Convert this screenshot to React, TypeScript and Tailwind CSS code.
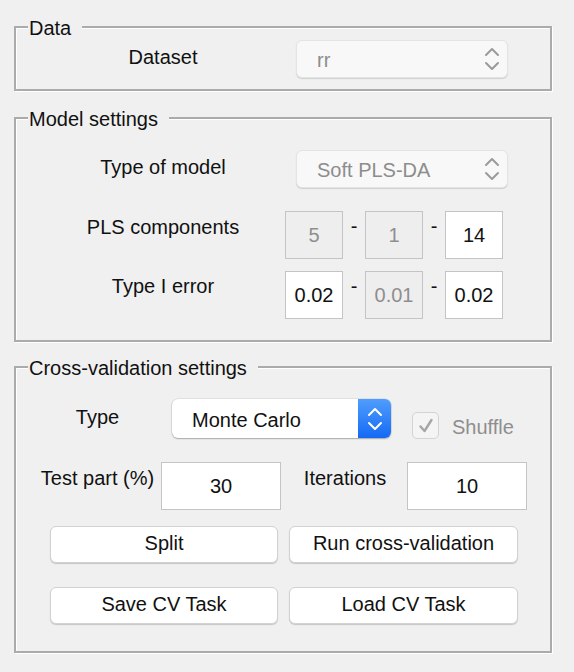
import type { ReactNode } from "react";

function Panel({ title, className, children }: { title: string; className: string; children: ReactNode }) {
  return (
    <div className={`relative w-[538px] border-2 border-[#ababab] shadow-[1px_1px_0_#ffffff,inset_1px_1px_0_#ffffff] ${className}`}>
      <div className="absolute -top-[11px] left-[12px] bg-[#f0f0f0] pl-[1px] pr-[11px] text-[20px] leading-[23px]">
        {title}
      </div>
      {children}
    </div>
  );
}

function Chevrons({ color }: { color: string }) {
  return (
    <svg width="16" height="24" viewBox="0 0 16 24" fill="none" stroke={color} strokeWidth="2" strokeLinecap="round" strokeLinejoin="round">
      <path d="M2 8 L8 2 L14 8" />
      <path d="M2 16 L8 22 L14 16" />
    </svg>
  );
}

function DisabledSelect({ value, className }: { value: string; className?: string }) {
  return (
    <div className={`flex h-[38px] w-[212px] items-center justify-between rounded-[6px] border border-[#e4e4e4] bg-[#f8f8f8] pl-[20px] pr-[7px] shadow-[0_1px_1px_rgba(0,0,0,0.14)] ${className ?? ""}`}>
      <span className="pt-[3px] text-[20px] leading-[23px] text-[#8d8d8d]">{value}</span>
      <Chevrons color="#9b9b9b" />
    </div>
  );
}

function Field({ value, disabled, className }: { value: string; disabled?: boolean; className: string }) {
  return (
    <div
      className={`flex h-[48px] items-center justify-center border border-[#c4c4c4] text-[20px] leading-[23px] ${
        disabled ? "bg-[#eeeeee] text-[#8e8e8e]" : "bg-white text-[#111]"
      } ${className}`}
    >
      {value}
    </div>
  );
}

function Button({ label, className }: { label: string; className: string }) {
  return (
    <div className={`flex h-[37px] items-center justify-center rounded-[6px] border border-[#d2d2d2] bg-white pb-[2px] text-[20px] leading-[23px] shadow-[0_1px_1px_rgba(0,0,0,0.18)] ${className}`}>
      {label}
    </div>
  );
}

function Range({ a, b, c }: { a: [string, boolean]; b: [string, boolean]; c: [string, boolean] }) {
  return (
    <div className="ml-[7px] flex items-start">
      <Field value={a[0]} disabled={a[1]} className="w-[58px]" />
      <div className="mt-[4px] w-[22px] text-center">-</div>
      <Field value={b[0]} disabled={b[1]} className="w-[58px]" />
      <div className="mt-[4px] w-[22px] text-center">-</div>
      <Field value={c[0]} disabled={c[1]} className="w-[58px]" />
    </div>
  );
}

export default function App() {
  return (
    <div className="h-[672px] w-[574px] bg-[#f0f0f0] pl-[14px] pt-[26px] font-['Liberation_Sans',Arial,sans-serif] text-[20px] leading-[23px] text-[#111]">
      <Panel title="Data" className="h-[65px]">
        <div className="flex items-start pt-[12px]">
          <div className="ml-[32px] mt-[6px] w-[230px] text-center">Dataset</div>
          <DisabledSelect value="rr" className="ml-[18px]" />
        </div>
      </Panel>

      <Panel title="Model settings" className="mt-[26px] h-[225px]">
        <div className="flex flex-col pt-[31px]">
          <div className="flex items-start">
            <div className="ml-[32px] mt-[6px] w-[230px] text-center">Type of model</div>
            <DisabledSelect value="Soft PLS-DA" className="ml-[18px]" />
          </div>
          <div className="mt-[23px] flex items-start">
            <div className="ml-[32px] mt-[5px] w-[230px] text-center">PLS components</div>
            <Range a={["5", true]} b={["1", true]} c={["14", false]} />
          </div>
          <div className="mt-[12px] flex items-start">
            <div className="ml-[32px] mt-[4px] w-[230px] text-center">Type I error</div>
            <Range a={["0.02", false]} b={["0.01", true]} c={["0.02", false]} />
          </div>
        </div>
      </Panel>

      <Panel title="Cross-validation settings" className="mt-[24px] h-[287px]">
        <div className="flex flex-col pt-[31px]">
          <div className="flex items-start">
            <div className="ml-[20px] mt-[7px] w-[123px] text-center">Type</div>
            <div className="ml-[13px] flex h-[39px] w-[219px] items-stretch overflow-hidden rounded-[6px] bg-white shadow-[0_0_0_0.5px_rgba(0,0,0,0.12),0_1px_1.5px_rgba(0,0,0,0.25)]">
              <div className="flex flex-1 items-center pl-[20px] pt-[3px]">Monte Carlo</div>
              <div className="flex w-[33px] items-center justify-center bg-gradient-to-b from-[#4f9dfd] to-[#1469f4]">
                <Chevrons color="#ffffff" />
              </div>
            </div>
            <div className="ml-[21px] mt-[13px] flex h-[27px] w-[27px] items-center justify-center rounded-[5px] border border-[#d3d3d3] bg-[#f4f4f4]">
              <svg width="18" height="18" viewBox="0 0 18 18" fill="none" stroke="#a6a6a6" strokeWidth="2.4" strokeLinecap="round" strokeLinejoin="round">
                <path d="M3.5 9.5 L7.5 14 L14.5 3" />
              </svg>
            </div>
            <div className="ml-[13px] mt-[17px] text-[#8e8e8e]">Shuffle</div>
          </div>

          <div className="mt-[23px] flex items-start">
            <div className="ml-[20px] mt-[5px] w-[123px] text-center">Test part (%)</div>
            <Field value="30" className="ml-[2px] w-[120px]" />
            <div className="ml-[4px] mt-[5px] w-[120px] text-center">Iterations</div>
            <Field value="10" className="ml-[2px] w-[120px]" />
          </div>

          <div className="mt-[16px] flex">
            <Button label="Split" className="ml-[34px] w-[228px]" />
            <Button label="Run cross-validation" className="ml-[11px] w-[229px]" />
          </div>
          <div className="mt-[24px] flex">
            <Button label="Save CV Task" className="ml-[34px] w-[228px]" />
            <Button label="Load CV Task" className="ml-[11px] w-[229px]" />
          </div>
        </div>
      </Panel>
    </div>
  );
}
